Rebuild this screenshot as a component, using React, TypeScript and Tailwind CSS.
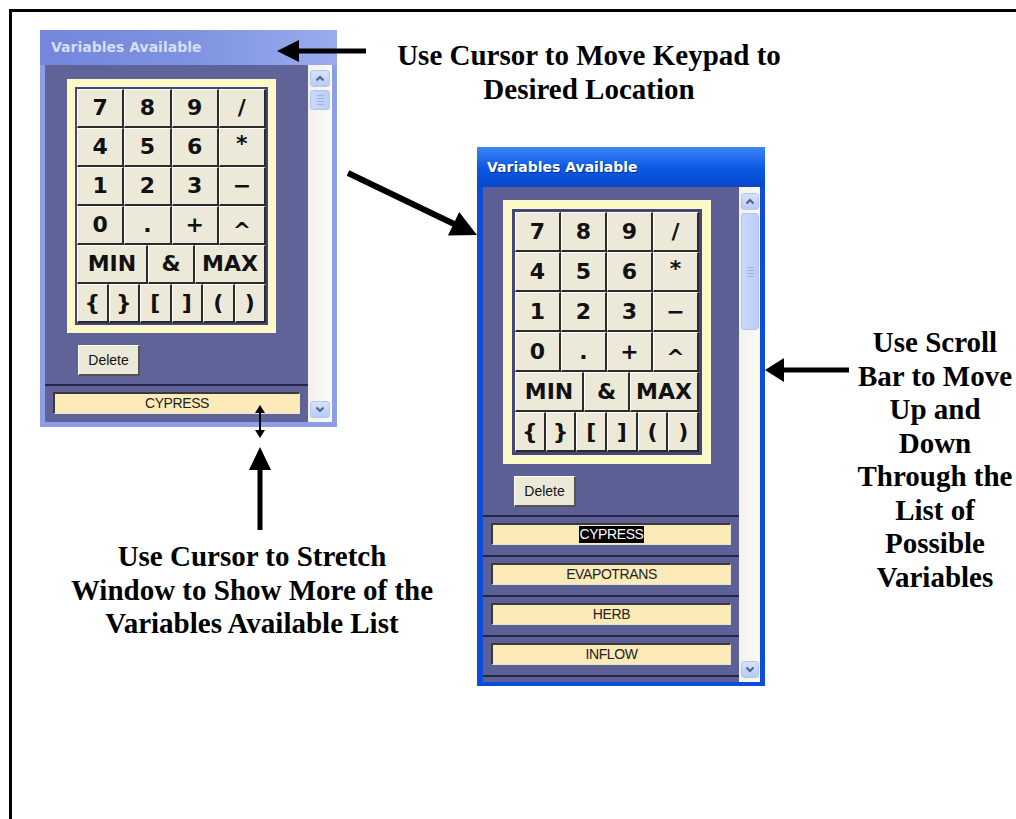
import React from 'react';

type Pt = [number, number];

const KEYS: [string, number][][] = [
  [['7', 6], ['8', 6], ['9', 6], ['/', 6]],
  [['4', 6], ['5', 6], ['6', 6], ['*', 6]],
  [['1', 6], ['2', 6], ['3', 6], ['−', 6]],
  [['0', 6], ['.', 6], ['+', 6], ['^', 6]],
  [['MIN', 9], ['&', 6], ['MAX', 9]],
  [['{', 4], ['}', 4], ['[', 4], [']', 4], ['(', 4], [')', 4]],
];

const SPAN: Record<number, string> = { 4: 'col-span-4', 6: 'col-span-6', 9: 'col-span-9' };

// polygon for a thick arrow ending in a triangular head at `to`
function arrowPoints(from: Pt, to: Pt, w: number, len: number, half: number) {
  const [x1, y1] = from;
  const [x2, y2] = to;
  const d = Math.hypot(x2 - x1, y2 - y1);
  const ux = (x2 - x1) / d;
  const uy = (y2 - y1) / d;
  const nx = -uy;
  const ny = ux;
  const bx = x2 - ux * len;
  const by = y2 - uy * len;
  const p = (x: number, y: number) => `${x.toFixed(1)},${y.toFixed(1)}`;
  return [
    p(x1 + (nx * w) / 2, y1 + (ny * w) / 2),
    p(bx + (nx * w) / 2, by + (ny * w) / 2),
    p(bx + nx * half, by + ny * half),
    p(x2, y2),
    p(bx - nx * half, by - ny * half),
    p(bx - (nx * w) / 2, by - (ny * w) / 2),
    p(x1 - (nx * w) / 2, y1 - (ny * w) / 2),
  ].join(' ');
}

const Keypad: React.FC<{ big: boolean }> = ({ big }) => (
  <div className={big ? 'w-fit border-[9px] border-[#fdf9c6]' : 'w-fit border-[8px] border-[#fdf9c6]'}>
    <div className={big ? 'border-[3px] border-[#42467a]' : 'border-[2px] border-[#42467a]'}>
      <div
        className={
          big
            ? 'grid w-[184px] grid-cols-[repeat(24,minmax(0,1fr))] auto-rows-[40px]'
            : 'grid w-[189px] grid-cols-[repeat(24,minmax(0,1fr))] auto-rows-[39px]'
        }
      >
        {KEYS.flat().map(([label, span], i) => (
          <div
            key={i}
            className={`${SPAN[span]} flex items-center justify-center bg-[#ece9d8] border-t border-l border-t-white border-l-white border-r-2 border-b-2 border-r-[#2b2b2b] border-b-[#2b2b2b] font-['DejaVu_Sans',sans-serif] text-[22px] font-bold leading-none text-[#111]`}
          >
            <span className={label === '^' ? 'translate-y-[6px]' : label === '*' ? '-translate-y-[3px]' : ''}>{label}</span>
          </div>
        ))}
      </div>
    </div>
  </div>
);

const Chevron: React.FC<{ up: boolean }> = ({ up }) => (
  <svg width="10" height="7" viewBox="0 0 10 7">
    <polyline
      points={up ? '1.5,5.5 5,2 8.5,5.5' : '1.5,1.5 5,5 8.5,1.5'}
      fill="none"
      stroke="#4d6185"
      strokeWidth="2"
    />
  </svg>
);

const ScrollButton: React.FC<{ up: boolean }> = ({ up }) => (
  <div className="h-[17px] flex items-center justify-center rounded-[3px] border border-[#b4c4ea] bg-gradient-to-b from-[#d6e2fd] to-[#b9cbf7]">
    <Chevron up={up} />
  </div>
);

const Thumb: React.FC<{ big: boolean }> = ({ big }) => (
  <div
    className={`${big ? 'h-[117px]' : 'h-[20px]'} mt-[3px] flex flex-col items-center justify-center gap-[2px] rounded-[3px] border border-[#b4c4ea] bg-gradient-to-r from-[#cad8fc] to-[#bccdf8]`}
  >
    {[0, 1, 2, 3].map(i => (
      <div key={i} className="h-px w-[7px] bg-[#e8eefd] border-b border-[#9fb2e2]" />
    ))}
  </div>
);

const Field: React.FC<{ name: string; selected?: boolean }> = ({ name, selected }) => (
  <div className="mx-[8px] h-[22px] flex items-center justify-center bg-[#fcebb9] border-t-2 border-l-2 border-t-[#3a3a3a] border-l-[#3a3a3a] border-b border-r border-b-[#e6e2d6] border-r-[#e6e2d6] font-['Liberation_Sans',sans-serif] text-[14px] tracking-[-0.4px] text-[#222]">
    <span className={selected ? 'bg-black text-white leading-[17px]' : ''}>{name}</span>
  </div>
);

const VarWindow: React.FC<{ active: boolean; items: string[] }> = ({ active, items }) => (
  <div className={active ? 'flex h-full w-full flex-col bg-[#0b4cd8]' : 'flex h-full w-full flex-col bg-[#8b9ee6]'}>
    <div
      className={
        active
          ? "h-[40px] shrink-0 flex items-center pl-[10px] bg-gradient-to-b from-[#3f86f6] via-[#0c5ae6] to-[#0847cc] font-['DejaVu_Sans',sans-serif] text-[14px] font-bold text-white [text-shadow:1px_1px_0_#0a2e8a]"
          : "h-[35px] shrink-0 flex items-center pl-[11px] bg-gradient-to-r from-[#7386dc] via-[#7e92e1] to-[#9aacee] font-['DejaVu_Sans',sans-serif] text-[14px] font-bold text-[#d7dff8]"
      }
    >
      Variables Available
    </div>
    <div className={active ? 'flex min-h-0 flex-1 ml-[6px] mr-[5px] mb-[4px]' : 'flex min-h-0 flex-1 mx-[5px] mb-[5px]'}>
      <div className={active ? 'flex-1 overflow-hidden bg-[#5d6095]' : 'flex-1 overflow-hidden bg-[#5f6397]'}>
        <div className={active ? 'mt-[13px] ml-[20px]' : 'mt-[14px] ml-[22px]'}>
          <Keypad big={active} />
        </div>
        <div className={active ? 'mt-[12px] ml-[31px]' : 'mt-[12px] ml-[33px]'}>
          <div className="w-[62px] h-[31px] flex items-center justify-center bg-[#ece9d8] border-t border-l border-t-white border-l-white border-r-2 border-b-2 border-r-[#55544e] border-b-[#55544e] font-['Liberation_Sans',sans-serif] text-[14px] text-[#111]">
            Delete
          </div>
        </div>
        <div className="mt-[8px]">
          {items.map((name, i) => (
            <div key={name}>
              <div className="h-[2px] bg-[#23264a]" />
              <div className="pt-[6px] pb-[10px]">
                <Field name={name} selected={active && i === 0} />
              </div>
            </div>
          ))}
          {active && <div className="h-[2px] bg-[#23264a]" />}
        </div>
      </div>
      <div
        className={
          active
            ? 'w-[21px] flex flex-col justify-between pt-[6px] pb-[4px] pl-[2px] pr-[1px] bg-gradient-to-r from-[#f2f1ea] to-[#fbfbf8]'
            : 'w-[24px] flex flex-col justify-between pt-[5px] pb-[4px] px-[2px] bg-gradient-to-r from-[#f2f1ea] to-[#fbfbf8]'
        }
      >
        <div>
          <ScrollButton up />
          <Thumb big={active} />
        </div>
        <ScrollButton up={false} />
      </div>
    </div>
  </div>
);

const App: React.FC = () => {
  const serif = "font-['Liberation_Serif',serif] font-bold text-[29px] leading-[33.5px] text-black text-center whitespace-nowrap";
  return (
    <div className="relative w-[1016px] h-[819px] overflow-hidden bg-white">
      <div className="ml-[9px] mt-[9px] h-[810px] border-l-[3px] border-t-[3px] border-black" />

      <div className="absolute left-[40px] top-[30px] w-[297px] h-[397px]">
        <VarWindow active={false} items={['CYPRESS']} />
      </div>

      <div className="absolute left-[477px] top-[147px] w-[288px] h-[539px]">
        <VarWindow active items={['CYPRESS', 'EVAPOTRANS', 'HERB', 'INFLOW']} />
      </div>

      <div className={`absolute left-[389px] top-[39px] w-[400px] ${serif}`}>
        Use Cursor to Move Keypad to
        <br />
        Desired Location
      </div>

      <div className={`absolute left-[52px] top-[540px] w-[400px] ${serif}`}>
        Use Cursor to Stretch
        <br />
        Window to Show More of the
        <br />
        Variables Available List
      </div>

      <div className={`absolute left-[855px] top-[326px] w-[160px] ${serif}`}>
        Use Scroll
        <br />
        Bar to Move
        <br />
        Up and
        <br />
        Down
        <br />
        Through the
        <br />
        List of
        <br />
        Possible
        <br />
        Variables
      </div>

      <svg className="pointer-events-none absolute left-0 top-0" width="1016" height="819">
        <polygon points={arrowPoints([366, 51], [277, 51], 5, 22, 11)} fill="#000" />
        <polygon points={arrowPoints([348, 173], [477, 235], 6, 26, 13)} fill="#000" />
        <polygon points={arrowPoints([260, 530], [260, 447], 5, 23, 11)} fill="#000" />
        <polygon points={arrowPoints([849, 370], [765, 370], 5, 19, 12)} fill="#000" />
        <polygon points={arrowPoints([260, 422], [260, 405], 2, 8, 5)} fill="#000" />
        <polygon points={arrowPoints([260, 421], [260, 438], 2, 8, 5)} fill="#000" />
      </svg>
    </div>
  );
};

export default App;
